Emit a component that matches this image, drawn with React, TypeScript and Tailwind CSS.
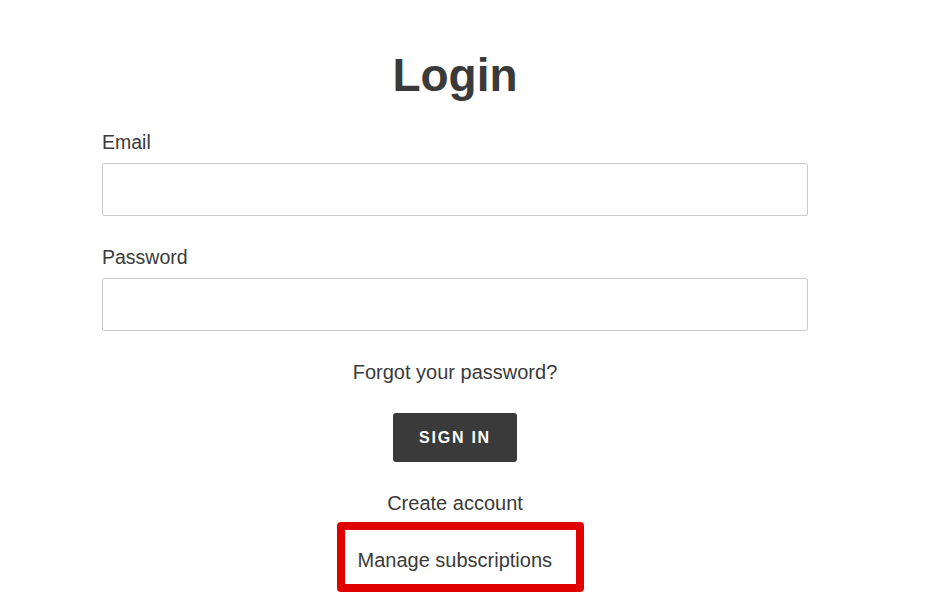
import React from "react";

export default function App() {
  return (
    <div className="min-h-[596px] w-[952px] bg-white text-[#3a3a3a] font-['Liberation_Sans',Arial,sans-serif]">
      <div className="ml-[102px] w-[706px] pt-[48px]">
        <h1 className="text-center text-[46px] font-bold leading-[54px]">Login</h1>

        <form className="mt-[27px]" onSubmit={(e) => e.preventDefault()}>
          <label className="block text-[19.5px] leading-[26px]">Email</label>
          <input
            type="email"
            className="mt-[8px] block h-[53px] w-full rounded-[2px] border border-[#cccccc] px-3 outline-none"
          />

          <label className="mt-[28px] block text-[19.5px] leading-[26px]">Password</label>
          <input
            type="password"
            className="mt-[8px] block h-[53px] w-full rounded-[2px] border border-[#cccccc] px-3 outline-none"
          />

          <div className="mt-[28px] text-center text-[20px] leading-[26px]">
            <a href="#">Forgot your password?</a>
          </div>

          <div className="mt-[28px] flex justify-center">
            <button
              type="submit"
              className="h-[49px] w-[124px] rounded-[3px] bg-[#3a3a3a] text-[16px] font-bold tracking-[0.11em] text-white"
            >
              SIGN IN
            </button>
          </div>

          <div className="mt-[28px] text-center text-[20px] leading-[26px]">
            <a href="#">Create account</a>
          </div>

          <div className="mt-[6px] flex justify-center pl-[10px]">
            <div className="flex h-[70px] w-[247px] items-center rounded-[4px] border-[8px] border-[#e00000] pl-[13px] pt-[6px] text-[20px]">
              <a href="#">Manage subscriptions</a>
            </div>
          </div>
        </form>
      </div>
    </div>
  );
}
